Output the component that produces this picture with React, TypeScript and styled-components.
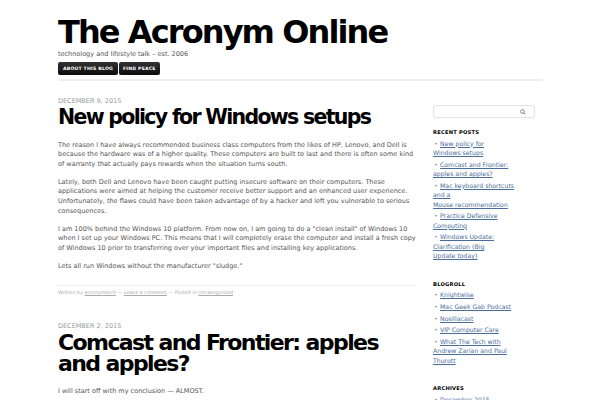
import React from 'react'
import styled, { createGlobalStyle } from 'styled-components'

const GlobalStyle = createGlobalStyle`
    html, body {
        margin: 0;
        padding: 0;
        background: #fff;
    }
    body {
        font-family: "DejaVu Sans", Verdana, sans-serif;
        color: #555;
    }
`

const Page = styled.div`
    width: 485px;
    padding: 14px 0 0 58px;
`

const Header = styled.header`
    border-bottom: 2px solid #eee;
    padding-bottom: 4px;
`

const SiteTitle = styled.h1`
    margin: 0;
    font-size: 32px;
    line-height: 36px;
    font-weight: bold;
    color: #000;
    letter-spacing: -1.9px;
`

const Tagline = styled.p`
    margin: 0 0 3px;
    font-size: 6.5px;
    line-height: 9px;
    color: #555;
`

const Nav = styled.nav`
    display: flex;
    gap: 1px;
`

const NavButton = styled.a<{ $pad?: number }>`
    display: flex;
    align-items: center;
    height: 13px;
    padding: 0 ${(p) => p.$pad ?? 5}px;
    background: linear-gradient(#333, #0a0a0a);
    border-radius: 2px;
    color: #fff;
    font-size: 4.6px;
    font-weight: bold;
    letter-spacing: 0.2px;
    text-transform: uppercase;
    text-decoration: none;
`

const Columns = styled.div`
    display: flex;
    gap: 17px;
    align-items: flex-start;
`

const Main = styled.main`
    width: 358px;
    flex: none;
`

const Post = styled.article<{ $gap?: number }>`
    padding-top: ${(p) => p.$gap ?? 16}px;
`

const PostDate = styled.div`
    font-size: 6.5px;
    line-height: 9px;
    color: #999;
    text-transform: uppercase;
`

const PostTitle = styled.h2<{ $size?: number; $track?: number }>`
    margin: 1px 0 12px;
    font-size: ${(p) => p.$size ?? 20.5}px;
    line-height: 21.5px;
    font-weight: bold;
    color: #000;
    letter-spacing: ${(p) => p.$track ?? -1.7}px;
`

const Para = styled.p`
    margin: 0 0 8.5px;
    font-size: 6.5px;
    line-height: 9.6px;
    color: #555;
`

const Meta = styled.div`
    margin-top: 13px;
    border-top: 1px solid #eee;
    padding-top: 3px;
    font-size: 4.8px;
    line-height: 8px;
    color: #aaa;

    a {
        color: #aaa;
        text-decoration: underline;
    }
`

const Sidebar = styled.aside`
    width: 110px;
    padding-top: 24px;
`

const SearchBox = styled.div`
    display: flex;
    align-items: center;
    justify-content: flex-end;
    width: 92px;
    height: 11px;
    border: 1px solid #e2e2e2;
    border-radius: 3px;
    padding-right: 8px;
    margin-bottom: 10px;
`

const WidgetTitle = styled.h3`
    margin: 0 0 2.5px;
    font-size: 5.2px;
    line-height: 8px;
    font-weight: bold;
    color: #000;
    letter-spacing: 0.2px;
    text-transform: uppercase;
`

const Widget = styled.section`
    margin-bottom: 19px;
`

const List = styled.ul`
    list-style: none;
    margin: 0;
    padding: 0;
`

const Item = styled.li`
    font-size: 6.2px;
    line-height: 9.5px;
    margin-bottom: 2.1px;
    color: #888;

    &::before {
        content: '•';
        display: inline-block;
        width: 6px;
        padding-left: 1px;
        color: #999;
    }

    a {
        color: #4a6d9c;
        text-decoration: underline;
    }
`

const recentPosts = [
    ['New policy for', 'Windows setups'],
    ['Comcast and Frontier:', 'apples and apples?'],
    ['Mac keyboard shortcuts', 'and a', 'Mouse recommendation'],
    ['Practice Defensive', 'Computing'],
    ['Windows Update:', 'Clarification (Big', 'Update today)'],
]

const blogroll = [
    ['Knightwise'],
    ['Mac Geek Gab Podcast'],
    ['Nosillacast'],
    ['VIP Computer Care'],
    ['What The Tech with', 'Andrew Zarian and Paul', 'Thurott'],
]

const Lines = ({ lines }: { lines: string[] }) => (
    <a href="#">
        {lines.map((l, i) => (
            <React.Fragment key={i}>
                {i > 0 && <br />}
                {l}
            </React.Fragment>
        ))}
    </a>
)

export default function App() {
    return (
        <>
            <GlobalStyle />
            <Page>
                <Header>
                    <SiteTitle>The Acronym Online</SiteTitle>
                    <Tagline>technology and lifestyle talk – est. 2006</Tagline>
                    <Nav>
                        <NavButton href="#" $pad={5}>About this blog</NavButton>
                        <NavButton href="#" $pad={4}>Find peace</NavButton>
                    </Nav>
                </Header>

                <Columns>
                    <Main>
                        <Post>
                            <PostDate>December 9, 2015</PostDate>
                            <PostTitle>New policy for Windows setups</PostTitle>
                            <Para>
                                The reason I have always recommended business class computers from the likes of HP, Lenovo, and Dell is
                                because the hardware was of a higher quality. These computers are built to last and there is often some kind
                                of warranty that actually pays rewards when the situation turns south.
                            </Para>
                            <Para>
                                Lately, both Dell and Lenovo have been caught putting insecure software on their computers. These
                                applications were aimed at helping the customer receive better support and an enhanced user experience.
                                Unfortunately, the flaws could have been taken advantage of by a hacker and left you vulnerable to serious
                                consequences.
                            </Para>
                            <Para>
                                I am 100% behind the Windows 10 platform. From now on, I am going to do a "clean install" of Windows 10
                                when I set up your Windows PC. This means that I will completely erase the computer and install a fresh copy
                                of Windows 10 prior to transferring over your important files and installing key applications.
                            </Para>
                            <Para>Lets all run Windows without the manufacturer "sludge."</Para>
                            <Meta>
                                Written by <a href="#">acronymtech</a> — <a href="#">Leave a comment</a> — Posted in{' '}
                                <a href="#">Uncategorized</a>
                            </Meta>
                        </Post>

                        <Post $gap={25}>
                            <PostDate>December 2, 2015</PostDate>
                            <PostTitle $size={22} $track={-1.6}>Comcast and Frontier: apples and apples?</PostTitle>
                            <Para>I will start off with my conclusion — ALMOST.</Para>
                        </Post>
                    </Main>

                    <Sidebar>
                        <SearchBox>
                            <svg width="6" height="6" viewBox="0 0 10 10" fill="none" stroke="#777" strokeWidth="1.6">
                                <circle cx="4.2" cy="4.2" r="3" />
                                <line x1="6.4" y1="6.4" x2="9" y2="9" />
                            </svg>
                        </SearchBox>

                        <Widget>
                            <WidgetTitle>Recent Posts</WidgetTitle>
                            <List>
                                {recentPosts.map((p, i) => (
                                    <Item key={i}><Lines lines={p} /></Item>
                                ))}
                            </List>
                        </Widget>

                        <Widget>
                            <WidgetTitle>Blogroll</WidgetTitle>
                            <List>
                                {blogroll.map((p, i) => (
                                    <Item key={i}><Lines lines={p} /></Item>
                                ))}
                            </List>
                        </Widget>

                        <Widget>
                            <WidgetTitle>Archives</WidgetTitle>
                            <List>
                                <Item><Lines lines={['December 2015']} /></Item>
                            </List>
                        </Widget>
                    </Sidebar>
                </Columns>
            </Page>
        </>
    )
}
